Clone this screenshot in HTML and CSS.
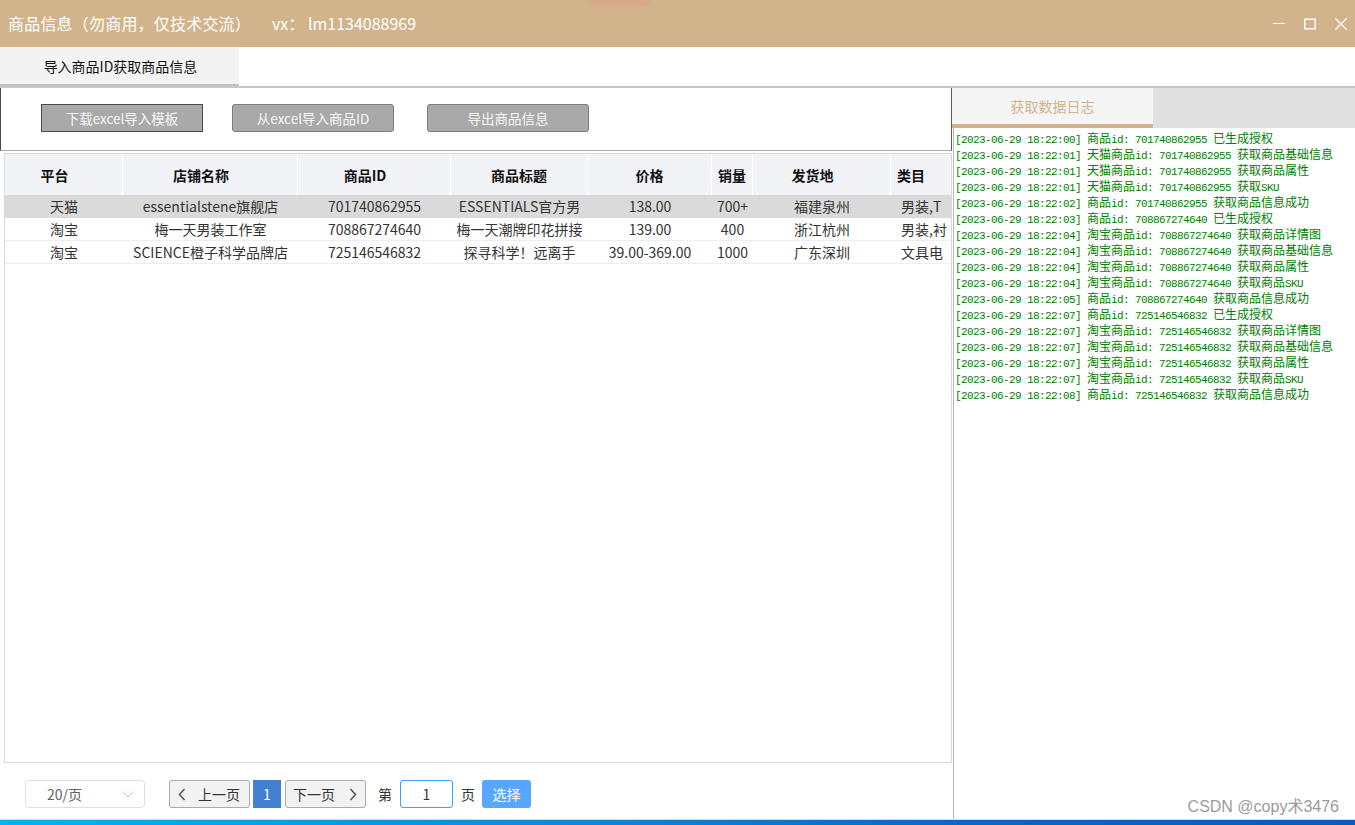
FILE: index.html
```html
<!DOCTYPE html>
<html lang="zh-CN">
<head>
<meta charset="utf-8">
<title>商品信息</title>
<link rel="stylesheet" href="styles.css">
</head>
<body>
<div class="window">
  <div class="titlebar">
    <div class="title">商品信息（勿商用，仅技术交流）<span class="vx">vx： lm1134088969</span></div>
    <div class="pill"></div>
    <div class="controls">
      <svg width="12" height="12" viewBox="0 0 12 12"><line x1="0" y1="5.5" x2="12" y2="5.5" stroke="#fff" stroke-width="1"/></svg>
      <svg width="12" height="12" viewBox="0 0 12 12"><rect x="0.75" y="1.25" width="10.5" height="9.5" fill="none" stroke="#fff" stroke-width="1.5"/></svg>
      <svg width="12" height="12" viewBox="0 0 12 12"><path d="M0.5 0.5L11.5 11.5M11.5 0.5L0.5 11.5" stroke="#fff" stroke-width="1.2" fill="none"/></svg>
    </div>
  </div>
  <div class="tabs">
    <div class="tab">导入商品ID获取商品信息</div>
  </div>
  <div class="main">
    <div class="left">
      <div class="toolbar">
        <div class="btn sq">下载excel导入模板</div>
        <div class="btn">从excel导入商品ID</div>
        <div class="btn b3">导出商品信息</div>
      </div>
      <div class="table">
        <div class="thead">
          <div class="th c1 sh">平台</div>
          <div class="th c2 sh">店铺名称</div>
          <div class="th c3 sh">商品ID</div>
          <div class="th c4">商品标题</div>
          <div class="th c5">价格</div>
          <div class="th c6">销量</div>
          <div class="th c7 sh">发货地</div>
          <div class="th c8 lt">类目</div>
        </div>
        <div class="tr sel">
          <div class="td c1">天猫</div>
          <div class="td c2">essentialstene旗舰店</div>
          <div class="td c3">701740862955</div>
          <div class="td c4">ESSENTIALS官方男</div>
          <div class="td c5">138.00</div>
          <div class="td c6">700+</div>
          <div class="td c7">福建泉州</div>
          <div class="td c8 lt">男装,T</div>
        </div>
        <div class="tr">
          <div class="td c1">淘宝</div>
          <div class="td c2">梅一天男装工作室</div>
          <div class="td c3">708867274640</div>
          <div class="td c4">梅一天潮牌印花拼接</div>
          <div class="td c5">139.00</div>
          <div class="td c6">400</div>
          <div class="td c7">浙江杭州</div>
          <div class="td c8 lt">男装,衬</div>
        </div>
        <div class="tr">
          <div class="td c1">淘宝</div>
          <div class="td c2">SCIENCE橙子科学品牌店</div>
          <div class="td c3">725146546832</div>
          <div class="td c4">探寻科学！远离手</div>
          <div class="td c5">39.00-369.00</div>
          <div class="td c6">1000</div>
          <div class="td c7">广东深圳</div>
          <div class="td c8 lt">文具电</div>
        </div>
      </div>
      <div class="pager">
        <div class="select">
          <span>20/页</span>
          <svg width="12" height="7" viewBox="0 0 12 7"><path d="M0.5 0.5L6 6L11.5 0.5" fill="none" stroke="#C0C4CC" stroke-width="1"/></svg>
        </div>
        <div class="pbtn prev">
          <svg width="8" height="13" viewBox="0 0 8 13"><path d="M6.5 1L1.5 6.5L6.5 12" fill="none" stroke="#555" stroke-width="1.5"/></svg>
          <span>上一页</span>
        </div>
        <div class="pnum">1</div>
        <div class="pbtn next">
          <span>下一页</span>
          <svg width="8" height="13" viewBox="0 0 8 13"><path d="M1.5 1L6.5 6.5L1.5 12" fill="none" stroke="#555" stroke-width="1.5"/></svg>
        </div>
        <span class="plabel di">第</span>
        <div class="pinput">1</div>
        <span class="plabel ye">页</span>
        <div class="pgo">选择</div>
      </div>
    </div>
    <div class="right">
      <div class="loghead">
        <div class="logtab">获取数据日志</div>
      </div>
      <div class="log">
        <div class="ln">[2023-06-29 18:22:00] <i>商品</i>id: 701740862955 <i>已生成授权</i></div>
        <div class="ln">[2023-06-29 18:22:01] <i>天猫商品</i>id: 701740862955 <i>获取商品基础信息</i></div>
        <div class="ln">[2023-06-29 18:22:01] <i>天猫商品</i>id: 701740862955 <i>获取商品属性</i></div>
        <div class="ln">[2023-06-29 18:22:01] <i>天猫商品</i>id: 701740862955 <i>获取</i>SKU</div>
        <div class="ln">[2023-06-29 18:22:02] <i>商品</i>id: 701740862955 <i>获取商品信息成功</i></div>
        <div class="ln">[2023-06-29 18:22:03] <i>商品</i>id: 708867274640 <i>已生成授权</i></div>
        <div class="ln">[2023-06-29 18:22:04] <i>淘宝商品</i>id: 708867274640 <i>获取商品详情图</i></div>
        <div class="ln">[2023-06-29 18:22:04] <i>淘宝商品</i>id: 708867274640 <i>获取商品基础信息</i></div>
        <div class="ln">[2023-06-29 18:22:04] <i>淘宝商品</i>id: 708867274640 <i>获取商品属性</i></div>
        <div class="ln">[2023-06-29 18:22:04] <i>淘宝商品</i>id: 708867274640 <i>获取商品</i>SKU</div>
        <div class="ln">[2023-06-29 18:22:05] <i>商品</i>id: 708867274640 <i>获取商品信息成功</i></div>
        <div class="ln">[2023-06-29 18:22:07] <i>商品</i>id: 725146546832 <i>已生成授权</i></div>
        <div class="ln">[2023-06-29 18:22:07] <i>淘宝商品</i>id: 725146546832 <i>获取商品详情图</i></div>
        <div class="ln">[2023-06-29 18:22:07] <i>淘宝商品</i>id: 725146546832 <i>获取商品基础信息</i></div>
        <div class="ln">[2023-06-29 18:22:07] <i>淘宝商品</i>id: 725146546832 <i>获取商品属性</i></div>
        <div class="ln">[2023-06-29 18:22:07] <i>淘宝商品</i>id: 725146546832 <i>获取商品</i>SKU</div>
        <div class="ln">[2023-06-29 18:22:08] <i>商品</i>id: 725146546832 <i>获取商品信息成功</i></div>
      </div>
      <div class="watermark">CSDN @copy术3476</div>
    </div>
  </div>
  <div class="taskbar"></div>
</div>
</body>
</html>
```

FILE: styles.css
```css
* { box-sizing: border-box; }
html, body { margin: 0; padding: 0; }
body {
  width: 1355px;
  height: 825px;
  overflow: hidden;
  background: #fff;
  font-family: "Noto Sans CJK SC", "Noto Sans", sans-serif;
}
.window { display: flex; flex-direction: column; height: 825px; }

/* title bar */
.titlebar {
  height: 47px;
  flex: none;
  background: #D2B48C;
  display: flex;
  align-items: center;
  justify-content: space-between;
  padding: 0 8px 0 8px;
  position: relative;
  color: #fff;
}
.title { font-size: 16px; line-height: 20px; margin-top: -2px; letter-spacing: 0.2px; }
.title .vx { margin-left: 21px; letter-spacing: 0; }
.pill {
  position: absolute;
  left: 588px;
  top: 0;
  width: 63px;
  height: 6px;
  border-radius: 0 0 6px 6px;
  background: #D8A98A;
}
.controls { display: flex; align-items: center; gap: 19px; }
.controls svg { display: block; }

/* tabs */
.tabs {
  height: 41px;
  flex: none;
  border-bottom: 2px solid #C8C8C8;
  display: flex;
}
.tab {
  width: 239px;
  background: #F3F3F3;
  font-size: 14px;
  color: #111;
  display: flex;
  align-items: center;
  justify-content: center;
  padding: 0 0 2px 2px;
  box-shadow: inset 0 -2px 0 #BFBFBF;
}

/* main */
.main {
  flex: 1;
  min-height: 0;
  display: flex;
  border-bottom: 1px solid #DCDCDC;
}
.left {
  width: 952px;
  flex: none;
  display: flex;
  flex-direction: column;
  overflow: hidden;
}
.toolbar {
  height: 63px;
  flex: none;
  border-left: 1px solid #4A4A4A;
  border-right: 1px solid #5A5A5A;
  border-bottom: 1px solid #ABABAB;
  display: flex;
  gap: 29px;
  padding: 16px 0 0 40px;
}
.btn {
  width: 162px;
  height: 28px;
  background: #A9A9A9;
  color: #F7F7F7;
  font-size: 13.5px;
  display: flex;
  align-items: center;
  justify-content: center;
  border: 1px solid #7C7C7C;
  border-radius: 3px;
}
.btn.sq { border-radius: 0; border-color: #4A4A4A; }
.btn.b3 { margin-left: 4px; }

/* table */
.table {
  margin: 2px 0 0 4px;
  height: 610px;
  flex: none;
  border: 1px solid #D9D9D9;
  overflow: hidden;
  font-size: 14px;
  color: #333;
}
.thead, .tr { display: flex; }
.thead {
  height: 41px;
  background: #F1F3F7;
  font-weight: 700;
  color: #111;
}
.th {
  flex: none;
  border-right: 1px solid #FFFFFF;
  display: flex;
  align-items: center;
  justify-content: center;
}
.th.sh { padding-right: 18px; }
.th.lt { justify-content: flex-start; padding-left: 6px; border-right: none; }
.tr { height: 23px; border-bottom: 1px solid #EBEEF5; }
.tr.sel { background: #DADADA; border-bottom-color: #DADADA; }
.td {
  flex: none;
  display: flex;
  align-items: center;
  justify-content: center;
  white-space: nowrap;
  overflow: hidden;
  line-height: 22px;
}
.td.lt { justify-content: flex-start; padding-left: 10px; }
.c1 { width: 118px; }
.c2 { width: 175px; }
.c3 { width: 153px; }
.c4 { width: 137px; }
.c5 { width: 124px; }
.c6 { width: 41px; }
.c7 { width: 138px; }
.c8 { width: 62px; }

/* pager */
.pager {
  flex: 1;
  display: flex;
  align-items: flex-start;
  padding: 17px 0 0 25px;
  font-size: 14px;
  color: #333;
}
.select {
  width: 120px;
  height: 28px;
  border: 1px solid #DCDFE6;
  border-radius: 4px;
  display: flex;
  align-items: center;
  justify-content: space-between;
  padding: 0 10px 0 21px;
  color: #606266;
}
.select svg { display: block; }
.pbtn {
  width: 81px;
  height: 28px;
  border: 1px solid #ABABAB;
  border-radius: 3px;
  background: #F2F2F2;
  display: flex;
  align-items: center;
  color: #333;
}
.pbtn svg { display: block; }
.prev { margin-left: 24px; padding-left: 8px; gap: 12px; }
.next { margin-left: 4px; padding-left: 7px; gap: 14px; }
.pnum {
  width: 28px;
  height: 28px;
  margin-left: 3px;
  background: #4380CF;
  color: #fff;
  display: flex;
  align-items: center;
  justify-content: center;
}
.plabel { line-height: 28px; }
.di { margin-left: 12px; }
.pinput {
  width: 53px;
  height: 28px;
  margin-left: 8px;
  border: 1px solid #409EFF;
  border-radius: 3px;
  display: flex;
  align-items: center;
  justify-content: center;
}
.ye { margin-left: 8px; }
.pgo {
  width: 49px;
  height: 28px;
  margin-left: 7px;
  background: #57A7FF;
  color: #fff;
  border-radius: 3px;
  display: flex;
  align-items: center;
  justify-content: center;
}

/* right log panel */
.right {
  flex: 1;
  display: flex;
  flex-direction: column;
  position: relative;
}
.loghead {
  height: 40px;
  flex: none;
  display: flex;
  background: #E0E0E0;
}
.logtab {
  width: 201px;
  background: #F5F5F5;
  border-bottom: 4px solid #D2B48C;
  color: #D2B48C;
  font-size: 14px;
  display: flex;
  align-items: center;
  justify-content: center;
}
.log {
  flex: 1;
  margin-left: 1px;
  border-left: 1px solid #B4B4B4;
  padding: 2px 0 0 1px;
  color: #008000;
}
.ln {
  height: 16px;
  line-height: 16px;
  font-family: "Liberation Mono", "DejaVu Sans Mono", monospace;
  font-size: 11px;
  letter-spacing: -0.6px;
  white-space: pre;
}
.ln i {
  font-style: normal;
  font-family: "Noto Sans CJK SC", sans-serif;
  font-size: 12px;
  letter-spacing: 0;
}
.watermark {
  position: absolute;
  right: 16px;
  bottom: 3px;
  font-family: "Liberation Sans", "Noto Sans CJK SC", sans-serif;
  font-size: 16px;
  line-height: 18px;
  color: #9B9B9B;
  text-shadow: 0 0 1px #fff;
}

.taskbar {
  height: 5px;
  flex: none;
  background: linear-gradient(to right, #00B4F0 0%, #0A8BE0 40%, #0A66CC 70%, #0B58C2 100%);
}
```
